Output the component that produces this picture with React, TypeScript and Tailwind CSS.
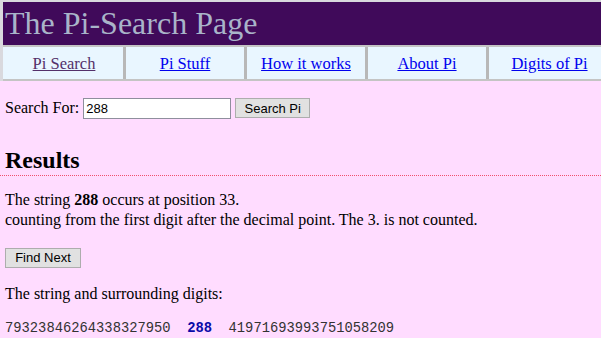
const navItems = [
  { label: "Pi Search", visited: true },
  { label: "Pi Stuff" },
  { label: "How it works" },
  { label: "About Pi" },
  { label: "Digits of Pi" },
]

export default function App() {
  return (
    <div
      className="w-[601px] h-[338px] overflow-hidden bg-[#ffdcff] text-black"
      style={{ fontFamily: '"Liberation Serif", "Times New Roman", serif' }}
    >
      <div className="w-[620px] border-t-2 border-l-[3px] border-[#d9d9de]">
        <div className="h-[43px] bg-[#400a5a] pl-[2px] pt-[2px] text-[32px] leading-[38px] text-[#a9b4c9]">
          The Pi-Search Page
        </div>
        <div className="flex h-[36px] pl-[2px] bg-[#e9f6ff] border-y-2 border-[#c4c4c4]">
          {navItems.map((item, i) => (
            <div
              key={item.label}
              className={`w-[121px] flex items-center justify-center pt-[2px] text-[16.5px] ${
                i < navItems.length - 1 ? "border-r-[3px] border-[#b8b8b8]" : ""
              }`}
            >
              <a
                href="#"
                className={`underline ${item.visited ? "text-[#53306a]" : "text-[#0000ee]"}`}
              >
                {item.label}
              </a>
            </div>
          ))}
        </div>
      </div>

      <div className="pl-[5px] pt-[16px]">
        <div className="flex items-center h-[22px] text-[16px]">
          <span>Search For:</span>
          <input
            readOnly
            value="288"
            className="ml-[4px] w-[148px] h-[21px] bg-white border border-[#8f8f9d] px-[2px] text-[13px] text-black outline-none"
            style={{ fontFamily: '"Liberation Sans", Arial, sans-serif' }}
          />
          <button
            className="ml-[4px] h-[20px] w-[75px] bg-[#e1e1e1] border border-[#adadad] text-[13px] text-black"
            style={{ fontFamily: '"Liberation Sans", Arial, sans-serif' }}
          >
            Search Pi
          </button>
        </div>
      </div>

      <h2 className="mt-[27px] pl-[5px] text-[24px] leading-[28px] font-bold">Results</h2>
      <div className="mt-[1px] border-t border-dotted border-[#f0506e]" />

      <div className="pl-[5px] pt-[14px] text-[16px] leading-[20px]">
        <p>
          The string <b>288</b> occurs at position 33.
          <br />
          counting from the first digit after the decimal point. The 3. is not counted.
        </p>
        <button
          className="mt-[18px] h-[20px] w-[76px] bg-[#e1e1e1] border border-[#adadad] text-[13px] leading-[18px] text-black"
          style={{ fontFamily: '"Liberation Sans", Arial, sans-serif' }}
        >
          Find Next
        </button>
        <p className="mt-[16px]">The string and surrounding digits:</p>
        <p
          className="mt-[15px] text-[13.8px] whitespace-pre text-[#333]"
          style={{ fontFamily: '"Liberation Mono", "Courier New", monospace' }}
        >
          79323846264338327950{"  "}
          <b className="text-[#0a0aa8]">288</b>
          {"  "}41971693993751058209
        </p>
      </div>
    </div>
  )
}
